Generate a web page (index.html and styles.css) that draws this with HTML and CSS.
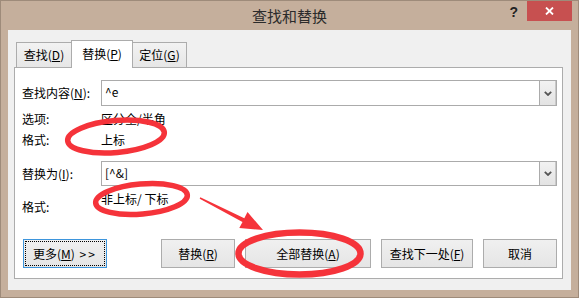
FILE: index.html
```html
<!DOCTYPE html>
<html lang="zh-CN">
<head>
<meta charset="utf-8">
<title>查找和替换</title>
<link rel="stylesheet" href="styles.css">
</head>
<body>
<div class="window">
  <div class="titlebar">
    <div class="title">查找和替换</div>
    <div class="controls">
      <div class="help">?</div>
      <div class="close">
        <svg width="9" height="8" viewBox="0 0 9 8"><path d="M1 0.5 L8 7.5 M8 0.5 L1 7.5" stroke="#fff" stroke-width="1.8" fill="none"/></svg>
      </div>
    </div>
  </div>
  <div class="client">
    <div class="tabs">
      <div class="tab t1">查找(<u>D</u>)</div>
      <div class="tab t2 active">替换(<u>P</u>)</div>
      <div class="tab t3">定位(<u>G</u>)</div>
    </div>
    <div class="panel">
      <div class="row r1">
        <div class="label">查找内容(<u>N</u>):</div>
        <div class="field"><span class="val">^e</span><span class="drop"><svg width="8" height="5" viewBox="0 0 8 5"><path d="M0.8 0.8 L4 4 L7.2 0.8" stroke="#555" stroke-width="1.8" fill="none"/></svg></span></div>
      </div>
      <div class="row r-opt">
        <div class="label">选项:</div>
        <div class="value">区分全/半角</div>
      </div>
      <div class="row r-fmt">
        <div class="label">格式:</div>
        <div class="value">上标</div>
      </div>
      <div class="row r2">
        <div class="label">替换为(<u>I</u>):</div>
        <div class="field"><span class="val">[^&amp;]</span><span class="drop"><svg width="8" height="5" viewBox="0 0 8 5"><path d="M0.8 0.8 L4 4 L7.2 0.8" stroke="#555" stroke-width="1.8" fill="none"/></svg></span></div>
      </div>
      <div class="row r-fmt2">
        <div class="label">格式:</div>
        <div class="value">非上标/ 下标</div>
      </div>
      <div class="buttons">
        <div class="btn more">更多(<u>M</u>) <span class="gt">&gt;&gt;</span></div>
        <div class="group">
          <div class="btn b-rep">替换(<u>R</u>)</div>
          <div class="btn b-all">全部替换(<u>A</u>)</div>
          <div class="btn b-next">查找下一处(<u>F</u>)</div>
          <div class="btn b-cancel">取消</div>
        </div>
      </div>
    </div>
  </div>
  <svg class="annot" width="579" height="298" viewBox="0 0 579 298">
    <ellipse cx="116" cy="136.5" rx="48.5" ry="16" transform="rotate(-5 116 136.5)" fill="none" stroke="#f5333a" stroke-width="5.5"/>
    <ellipse cx="141.5" cy="199" rx="46" ry="15" transform="rotate(-5 141.5 199)" fill="none" stroke="#f5333a" stroke-width="5.5"/>
    <ellipse cx="299.5" cy="253.5" rx="61" ry="21" fill="none" stroke="#f5333a" stroke-width="6.5"/>
    <polygon points="200.3,197.3 244.3,218.3 247.5,212.1 263,230 239.3,228.1 242.5,221.9 199.7,198.7" fill="#f5333a"/>
  </svg>
</div>
</body>
</html>
```

FILE: styles.css
```css
* { box-sizing: border-box; }

body {
  margin: 0;
  font-family: "Noto Sans CJK SC", "Noto Sans", sans-serif;
  font-size: 12px;
  color: #000;
}

u { text-decoration: underline; text-underline-offset: 1px; }

.window {
  position: relative;
  width: 579px;
  height: 298px;
  background: #c5af9c;
  border: 1px solid #9e8b7a;
  display: flex;
  flex-direction: column;
}

.titlebar {
  height: 29px;
  display: grid;
  grid-template-columns: 1fr auto 1fr;
}

.title {
  grid-column: 2;
  line-height: 29px;
  font-size: 15px;
  color: #2b2b2b;
}

.controls {
  grid-column: 3;
  display: flex;
  justify-content: flex-end;
  align-items: flex-start;
  gap: 9px;
  padding-right: 6px;
}

.help {
  font-family: "Liberation Sans", sans-serif;
  font-weight: bold;
  font-size: 14px;
  line-height: 22px;
  color: #222;
}

.close {
  width: 45px;
  height: 20px;
  background: #c75050;
  display: flex;
  align-items: center;
  justify-content: center;
}
.close svg { display: block; }

.client {
  margin: 0 7px;
  height: 260px;
  background: #f0f0f0;
  padding: 10px 8px 0 6px;
}

.tabs {
  display: flex;
  align-items: flex-end;
  height: 27px;
  padding-left: 2px;
}

.tab {
  height: 25px;
  border: 1px solid #acacac;
  border-bottom: none;
  background: linear-gradient(#f2f2f2, #e6e6e6);
  display: flex;
  align-items: center;
  justify-content: center;
  line-height: 16px;
}
.tab + .tab { margin-left: -1px; }
.t1 { width: 56px; }
.t2 { width: 62px; }
.t3 { width: 55px; }

.tab.active {
  height: 28px;
  margin-bottom: -1px;
  background: #fff;
  position: relative;
  z-index: 1;
  padding-bottom: 1px;
}

.panel {
  height: 212px;
  border: 1px solid #acacac;
  background: #fff;
  padding: 0 5px 10px 7px;
  display: flex;
  flex-direction: column;
}

.row {
  display: flex;
  align-items: center;
}

.label {
  width: 79px;
  flex: none;
  line-height: 20px;
}

.value { line-height: 20px; }

.field {
  flex: 1;
  height: 25px;
  border: 1px solid #ababab;
  display: flex;
  align-items: stretch;
}
.val {
  flex: 1;
  padding-left: 3px;
  line-height: 22px;
}
.drop {
  width: 17px;
  border-left: 1px solid #ababab;
  border-right: 1px solid #c9c9c9;
  background: linear-gradient(#f2f2f2, #e3e3e3);
  display: flex;
  align-items: center;
  justify-content: center;
}
.drop svg { display: block; }

.r1 { margin-top: 12px; }
.r1 .field { height: 26px; }
.r-opt { height: 20px; margin-top: 3px; }
.r-fmt { height: 20px; margin-top: 1px; }
.r2 { margin-top: 11px; }
.r-fmt2 { margin-top: 3px; align-items: flex-start; }
.r-fmt2 .label { margin-top: 8px; }

.buttons {
  margin-top: auto;
  display: flex;
  padding-left: 1px;
}

.group {
  margin-left: auto;
  display: flex;
  gap: 10px;
}

.btn {
  height: 29px;
  border: 1px solid #acacac;
  background: linear-gradient(#f0f0f0, #e5e5e5);
  display: flex;
  align-items: center;
  justify-content: center;
  white-space: pre;
}

.more {
  width: 84px;
  border-color: #3d95dc;
  outline: 1px dotted #000;
  outline-offset: -3px;
}
.gt { letter-spacing: 2px; margin-left: 2px; }

.b-rep { width: 74px; }
.b-all { width: 126px; }
.b-next { width: 92px; }
.b-cancel { width: 74px; }

.annot {
  position: absolute;
  top: -1px;
  left: -1px;
  pointer-events: none;
}
```
